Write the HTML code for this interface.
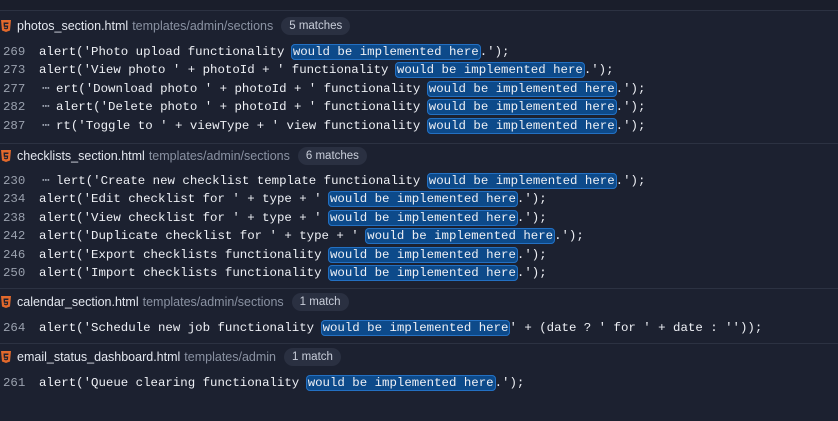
<!DOCTYPE html>
<html><head><meta charset="utf-8"><style>
html,body{margin:0;padding:0;width:838px;height:421px;overflow:hidden;background:#1c2130;}
.top{position:absolute;left:0;top:0;width:838px;height:10px;background:#1a1e2b;border-bottom:1px solid #2c3242;}
.div{position:absolute;left:0;width:838px;height:1px;background:#2c3242;}
.hdr{position:absolute;left:0;height:20px;line-height:20px;font-family:"Liberation Sans",sans-serif;font-size:12.5px;white-space:nowrap;}
.hdr .ic{position:absolute;left:1px;top:4px;}
.hdr .fn{position:absolute;left:17px;color:#e3e7ef;}
.hdr .p{color:#8a92a2;margin-left:4px;}
.hdr .b{display:inline-block;margin-left:8px;background:#2a3041;color:#c9ceda;border-radius:9px;padding:0 8px;height:18px;line-height:18px;font-size:11.5px;vertical-align:1px;}
.row{position:absolute;left:0;height:18px;line-height:18px;white-space:pre;font-family:"Liberation Mono",monospace;font-size:12.4px;color:#eef0f5;}
.row .n{position:absolute;left:3px;color:#9aa1ae;}
.row .c{position:absolute;left:39px;}
.row .c2{position:absolute;left:56px;}
.row .el{position:absolute;left:42px;color:#9aa1ae;font-size:13px;letter-spacing:-1px;}
.h{background:#0d4a8a;border:1px solid #2370c2;border-radius:4px;margin:0 -1px;padding:0 1px;}
</style></head><body>
<div class="top"></div>

<div class="hdr" style="top:16px;width:600px"><svg class="ic" width="10" height="12" viewBox="0 0 10 12"><path d="M0 0h10l-1 10.5L5 12 1 10.5z" fill="#e2692c"/><path d="M2.5 2.5h5l-.2 1.5H4l.1 1.5h3.1l-.3 3.3L5 9.4l-1.9-.6-.1-1.3h1.3l.1.5.6.2.7-.2.1-1.1H2.8z" fill="#1c2130"/></svg><span class="fn">photos_section.html<span class="p">templates/admin/sections</span><span class="b">5 matches</span></span></div>
<div class="row" style="top:43px"><span class="n">269</span><span class="c">alert('Photo upload functionality <span class="h">would be implemented here</span>.');</span></div>
<div class="row" style="top:61px"><span class="n">273</span><span class="c">alert('View photo ' + photoId + ' functionality <span class="h">would be implemented here</span>.');</span></div>
<div class="row" style="top:80px"><span class="n">277</span><span class="el">⋯</span><span class="c2">ert('Download photo ' + photoId + ' functionality <span class="h">would be implemented here</span>.');</span></div>
<div class="row" style="top:98px"><span class="n">282</span><span class="el">⋯</span><span class="c2">alert('Delete photo ' + photoId + ' functionality <span class="h">would be implemented here</span>.');</span></div>
<div class="row" style="top:117px"><span class="n">287</span><span class="el">⋯</span><span class="c2">rt('Toggle to ' + viewType + ' view functionality <span class="h">would be implemented here</span>.');</span></div>
<div class="div" style="top:143px"></div>

<div class="hdr" style="top:146px;width:600px"><svg class="ic" width="10" height="12" viewBox="0 0 10 12"><path d="M0 0h10l-1 10.5L5 12 1 10.5z" fill="#e2692c"/><path d="M2.5 2.5h5l-.2 1.5H4l.1 1.5h3.1l-.3 3.3L5 9.4l-1.9-.6-.1-1.3h1.3l.1.5.6.2.7-.2.1-1.1H2.8z" fill="#1c2130"/></svg><span class="fn">checklists_section.html<span class="p">templates/admin/sections</span><span class="b">6 matches</span></span></div>
<div class="row" style="top:172px"><span class="n">230</span><span class="el">⋯</span><span class="c2">lert('Create new checklist template functionality <span class="h">would be implemented here</span>.');</span></div>
<div class="row" style="top:190px"><span class="n">234</span><span class="c">alert('Edit checklist for ' + type + ' <span class="h">would be implemented here</span>.');</span></div>
<div class="row" style="top:209px"><span class="n">238</span><span class="c">alert('View checklist for ' + type + ' <span class="h">would be implemented here</span>.');</span></div>
<div class="row" style="top:227px"><span class="n">242</span><span class="c">alert('Duplicate checklist for ' + type + ' <span class="h">would be implemented here</span>.');</span></div>
<div class="row" style="top:246px"><span class="n">246</span><span class="c">alert('Export checklists functionality <span class="h">would be implemented here</span>.');</span></div>
<div class="row" style="top:264px"><span class="n">250</span><span class="c">alert('Import checklists functionality <span class="h">would be implemented here</span>.');</span></div>
<div class="div" style="top:288px"></div>

<div class="hdr" style="top:292px;width:600px"><svg class="ic" width="10" height="12" viewBox="0 0 10 12"><path d="M0 0h10l-1 10.5L5 12 1 10.5z" fill="#e2692c"/><path d="M2.5 2.5h5l-.2 1.5H4l.1 1.5h3.1l-.3 3.3L5 9.4l-1.9-.6-.1-1.3h1.3l.1.5.6.2.7-.2.1-1.1H2.8z" fill="#1c2130"/></svg><span class="fn">calendar_section.html<span class="p">templates/admin/sections</span><span class="b">1 match</span></span></div>
<div class="row" style="top:319px"><span class="n">264</span><span class="c">alert('Schedule new job functionality <span class="h">would be implemented here</span>' + (date ? ' for ' + date : ''));</span></div>
<div class="div" style="top:343px"></div>

<div class="hdr" style="top:347px;width:600px"><svg class="ic" width="10" height="12" viewBox="0 0 10 12"><path d="M0 0h10l-1 10.5L5 12 1 10.5z" fill="#e2692c"/><path d="M2.5 2.5h5l-.2 1.5H4l.1 1.5h3.1l-.3 3.3L5 9.4l-1.9-.6-.1-1.3h1.3l.1.5.6.2.7-.2.1-1.1H2.8z" fill="#1c2130"/></svg><span class="fn">email_status_dashboard.html<span class="p">templates/admin</span><span class="b">1 match</span></span></div>
<div class="row" style="top:374px"><span class="n">261</span><span class="c">alert('Queue clearing functionality <span class="h">would be implemented here</span>.');</span></div>
</body></html>
